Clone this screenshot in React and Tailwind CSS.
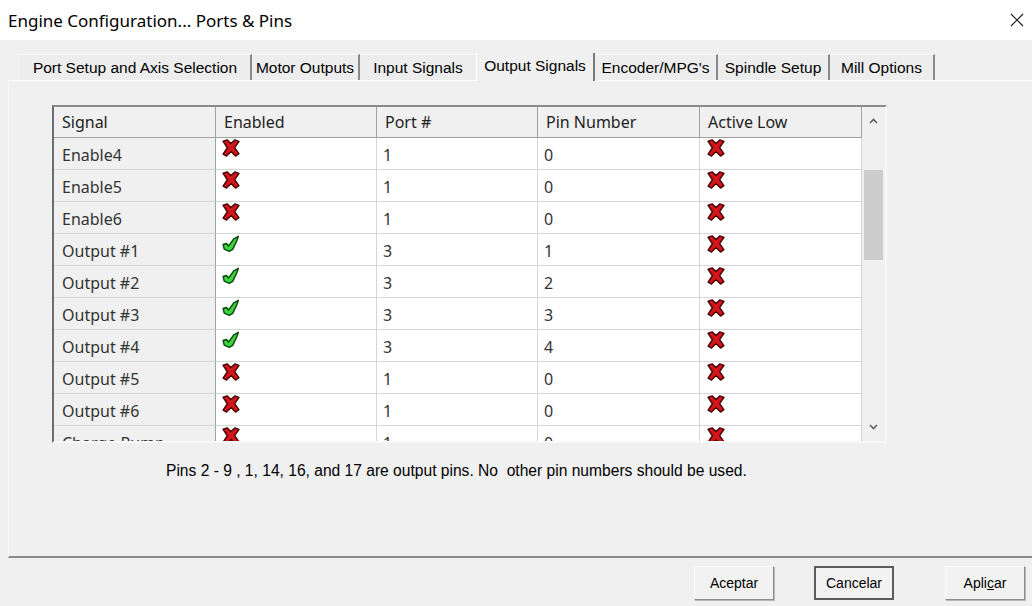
import React from "react";

const rows = [
  { name: "Enable4", on: false, port: 1, pin: 0 },
  { name: "Enable5", on: false, port: 1, pin: 0 },
  { name: "Enable6", on: false, port: 1, pin: 0 },
  { name: "Output #1", on: true, port: 3, pin: 1 },
  { name: "Output #2", on: true, port: 3, pin: 2 },
  { name: "Output #3", on: true, port: 3, pin: 3 },
  { name: "Output #4", on: true, port: 3, pin: 4 },
  { name: "Output #5", on: false, port: 1, pin: 0 },
  { name: "Output #6", on: false, port: 1, pin: 0 },
  { name: "Charge Pump", on: false, port: 1, pin: 0 },
];

const tabs = [
  { label: "Port Setup and Axis Selection", w: "w-[232px]", sep: true },
  { label: "Motor Outputs", w: "w-[108px]", sep: true },
  { label: "Input Signals", w: "w-[116px]", sep: false },
  { label: "Output Signals", w: "w-[119px]", sep: true, active: true },
  { label: "Encoder/MPG's", w: "w-[123px]", sep: true },
  { label: "Spindle Setup", w: "w-[112px]", sep: true },
  { label: "Mill Options", w: "w-[105px]", sep: true },
];

function RedX() {
  return (
    <svg width="18" height="18" viewBox="0 0 16 16">
      <polygon
        points="1,2 4.5,0.8 8,4 11.5,0.8 15,2.2 11.2,7.6 15,13 12,15.2 8,11.2 4,15.2 1,13.4 4.8,7.8"
        fill="#d4161c"
        stroke="#4a0606"
        strokeWidth="1.3"
        strokeLinejoin="round"
      />
    </svg>
  );
}

function GreenCheck() {
  return (
    <svg width="18" height="18" viewBox="0 0 16 16">
      <polygon
        points="1,8.5 4,7.5 5.8,9.8 10.5,3.5 14.5,1.2 13.2,5 9.5,12.8 6.5,14.5 2,12.5"
        fill="#3ed43e"
        stroke="#0b4a10"
        strokeWidth="1.3"
        strokeLinejoin="round"
      />
    </svg>
  );
}

function Cell({ children, first, last }) {
  return (
    <div
      className={`h-[32px] border-b border-[#d6d6d6] ${
        first ? "bg-[#f0f0f0] border-r border-r-[#a0a0a0]" : "bg-white border-r border-r-[#d6d6d6]"
      } ${last ? "border-r-[#a0a0a0]" : ""} pl-[6px] text-[#333] overflow-hidden whitespace-nowrap`}
    >
      {children}
    </div>
  );
}

function SignalTable() {
  const head = ["Signal", "Enabled", "Port #", "Pin Number", "Active Low"];
  return (
    <div className="flex w-[835px] h-[338px] border-2 border-t-[#8a8a8a] border-l-[#6e6e6e] border-r-[#f8f8f8] border-b-[#f8f8f8] overflow-hidden font-['Noto_Sans',sans-serif] text-[16px]">
      <div className="grid grid-cols-[162px_161px_161px_162px_162px] auto-rows-min content-start w-[808px] h-[334px] overflow-hidden">
        {head.map((h) => (
          <div
            key={h}
            className="h-[31px] bg-[#f0f0f0] border-r border-b border-[#a0a0a0] pl-[8px] leading-[31px] text-[#222]"
          >
            {h}
          </div>
        ))}
        {rows.map((r) => (
          <React.Fragment key={r.name}>
            <Cell first>
              <span className="block pl-[2px] leading-[34px]">{r.name}</span>
            </Cell>
            <Cell>
              <div className="pt-[1px]">{r.on ? <GreenCheck /> : <RedX />}</div>
            </Cell>
            <Cell>
              <span className="block leading-[34px]">{r.port}</span>
            </Cell>
            <Cell>
              <span className="block leading-[34px]">{r.pin}</span>
            </Cell>
            <Cell last>
              <div className="pt-[1px] pl-[1px]">
                <RedX />
              </div>
            </Cell>
          </React.Fragment>
        ))}
      </div>
      {/* vertical scroll bar */}
      <div className="w-[23px] h-full bg-[#f0f0f0] flex flex-col items-center">
        <div className="h-[28px] flex items-center justify-center">
          <svg width="9" height="6" viewBox="0 0 9 6">
            <path d="M1 5 L4.5 1.5 L8 5" fill="none" stroke="#606060" strokeWidth="1.6" />
          </svg>
        </div>
        <div className="mt-[35px] w-[19px] h-[90px] bg-[#cdcdcd]" />
        <div className="flex-1" />
        <div className="h-[28px] flex items-center justify-center">
          <svg width="9" height="6" viewBox="0 0 9 6">
            <path d="M1 1 L4.5 4.5 L8 1" fill="none" stroke="#606060" strokeWidth="1.6" />
          </svg>
        </div>
      </div>
    </div>
  );
}

function Button({ children, main }) {
  return (
    <button
      className={`w-[80px] h-[34px] bg-[#f2f2f2] text-[14px] text-black font-['Liberation_Sans',Arial,sans-serif] ${
        main
          ? "border-2 border-[#5c5c5c]"
          : "border border-t-[#fcfcfc] border-l-[#fcfcfc] border-r-[#8c8c8c] border-b-[#8c8c8c] shadow-[1px_1px_0_#b8b8b8]"
      }`}
    >
      {children}
    </button>
  );
}

export default function App() {
  return (
    <div className="w-[1032px] h-[606px] bg-[#f0f0f0] overflow-hidden flex flex-col">
      <div className="h-[40px] bg-white flex items-center justify-between pl-[8px] pr-[4px] font-['Noto_Sans',sans-serif] text-[17px] text-black">
        <span className="pt-[1px]">Engine Configuration... Ports &amp; Pins</span>
        <svg width="22" height="22" viewBox="0 0 22 22">
          <path d="M5 5 L17 17 M17 5 L5 17" stroke="#222" strokeWidth="1.2" />
        </svg>
      </div>

      <div className="mt-[14px] ml-[20px] flex items-end h-[26px] font-['Liberation_Sans',Arial,sans-serif] text-[15.5px] text-black relative z-10">
        {tabs.map((t) => (
          <div
            key={t.label}
            className={`${t.w} flex items-center justify-center whitespace-nowrap ${
              t.active
                ? "h-[28px] bg-[#f0f0f0] border-l border-l-white border-r-2 border-r-[#7a7a7a] -mb-[1px]"
                : "h-[26px] bg-[#ededed] border-t border-t-[#f8f8f8]"
            } ${!t.active && t.sep ? "border-r-2 border-r-[#8a8a8a]" : ""}`}
          >
            <span className={t.active ? "-mt-[3px]" : ""}>{t.label}</span>
          </div>
        ))}
      </div>

      <div className="ml-[8px] h-[478px] border-t border-t-white border-l border-l-[#f8f8f8] border-b-2 border-b-[#8c8c8c] flex flex-col pl-[43px] pt-[24px]">
        <SignalTable />
        <p className="mt-[16px] ml-[114px] font-['Liberation_Sans',Arial,sans-serif] text-[15.6px] text-black whitespace-pre">
          Pins 2 - 9 , 1, 14, 16, and 17 are output pins. No  other pin numbers should be used.
        </p>
      </div>

      <div className="flex items-start pt-[8px] pl-[694px]">
        <Button>Aceptar</Button>
        <div className="ml-[40px]">
          <Button main>Cancelar</Button>
        </div>
        <div className="ml-[51px]">
          <Button>
            Apli<u>c</u>ar
          </Button>
        </div>
      </div>
    </div>
  );
}
